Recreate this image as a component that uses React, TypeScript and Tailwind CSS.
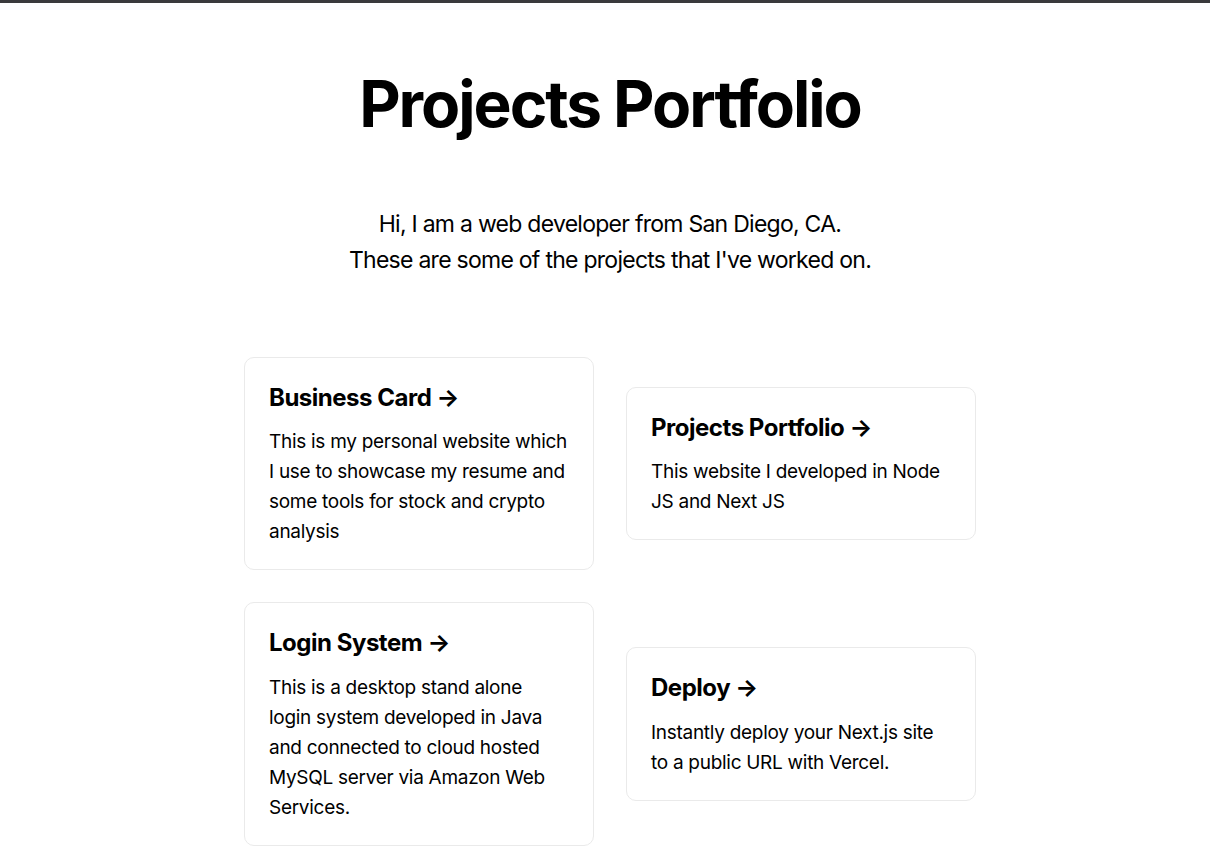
import React from "react";

type Project = {
  title: string;
  description: string;
};

const LEFT: Project[] = [
  {
    title: "Business Card",
    description:
      "This is my personal website which I use to showcase my resume and some tools for stock and crypto analysis",
  },
  {
    title: "Login System",
    description:
      "This is a desktop stand alone login system developed in Java and connected to cloud hosted MySQL server via Amazon Web Services.",
  },
];

const RIGHT: Project[] = [
  {
    title: "Projects Portfolio",
    description: "This website I developed in Node JS and Next JS",
  },
  {
    title: "Deploy",
    description: "Instantly deploy your Next.js site to a public URL with Vercel.",
  },
];

function ProjectCard({ title, description }: Project) {
  return (
    <a
      href="#"
      className="block w-[350px] rounded-[10px] border border-[#eaeaea] px-6 pt-[26px] pb-[22px] text-black"
    >
      <h2 className="mb-4 text-[24px] leading-[1.15] font-bold tracking-[-0.02em]">
        {title} &rarr;
      </h2>
      <p className="text-[19px] leading-[30px] tracking-[-0.015em]">{description}</p>
    </a>
  );
}

export default function App() {
  return (
    <div className="min-h-screen bg-white font-['Inter','Liberation_Sans',sans-serif] text-black">
      <div className="h-[3px] bg-[#3a3a3c]" />
      <main className="flex flex-col items-center pl-[10px] pt-[64px] pb-20">
        <h1 className="text-[64px] leading-[1.15] font-bold tracking-[-0.032em]">
          Projects Portfolio
        </h1>

        <p className="mt-[65px] text-center text-[23px] leading-[36px] tracking-[-0.032em]">
          Hi, I am a web developer from San Diego, CA.
          <br />
          These are some of the projects that I&apos;ve worked on.
        </p>

        <div className="mt-[79px] flex flex-col gap-8">
          {[0, 1].map((row) => (
            <div key={row} className="flex items-center gap-8">
              <ProjectCard {...LEFT[row]} />
              <ProjectCard {...RIGHT[row]} />
            </div>
          ))}
        </div>
      </main>
    </div>
  );
}
